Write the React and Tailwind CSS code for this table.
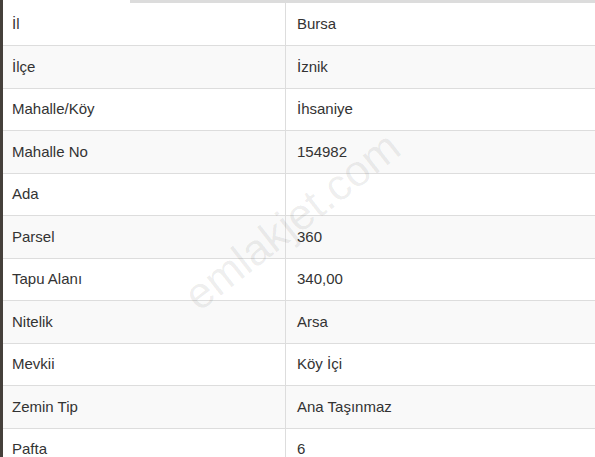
import React from "react";

const rows = [
  ["İl", "Bursa"],
  ["İlçe", "İznik"],
  ["Mahalle/Köy", "İhsaniye"],
  ["Mahalle No", "154982"],
  ["Ada", ""],
  ["Parsel", "360"],
  ["Tapu Alanı", "340,00"],
  ["Nitelik", "Arsa"],
  ["Mevkii", "Köy İçi"],
  ["Zemin Tip", "Ana Taşınmaz"],
  ["Pafta", "6"],
];

export default function App() {
  return (
    <div
      className="relative w-[595px] h-[457px] overflow-hidden bg-white flex"
      style={{ fontFamily: '"Liberation Sans", Arial, sans-serif' }}
    >
      <div className="w-[3px] shrink-0 bg-[#45403b]" />
      <div className="flex-1 flex flex-col">
        <div className="h-[3px] shrink-0 flex">
          <div className="w-[127px] bg-white" />
          <div className="flex-1 bg-[#dcdcdc]" />
        </div>
        {rows.map(([k, v], i) => (
          <div
            key={k}
            className={`flex shrink-0 text-[15px] text-[#333] ${i === 0 ? "h-[42px]" : "h-[42.5px] border-t border-[#dddddd]"} ${i % 2 === 1 ? "bg-[#f9f9f9]" : "bg-white"}`}
          >
            <div className="w-[283px] border-r border-[#dddddd] flex items-center pl-[9px]">{k}</div>
            <div className="flex-1 flex items-center pl-[11px]">{v}</div>
          </div>
        ))}
      </div>
      <div
        className="absolute left-[292px] top-[221px] text-[44px] text-black/[0.07] whitespace-nowrap pointer-events-none"
        style={{ transform: "translate(-50%, -50%) rotate(-38deg)" }}
      >
        emlakjet.com
      </div>
    </div>
  );
}
